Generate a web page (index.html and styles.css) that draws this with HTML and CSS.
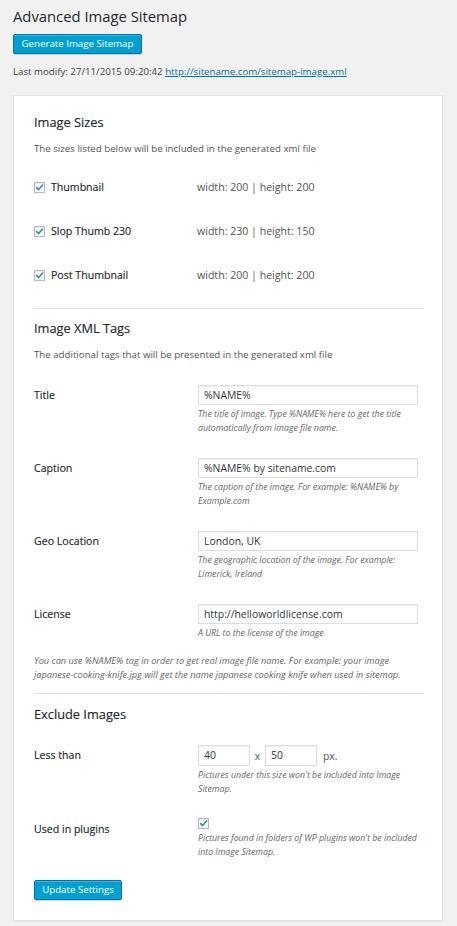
FILE: index.html
```html
<!DOCTYPE html>
<html lang="en">
<head>
<meta charset="utf-8">
<title>Advanced Image Sitemap</title>
<link rel="stylesheet" href="styles.css">
</head>
<body>
<div class="wrap">
  <h1 class="page-title">Advanced Image Sitemap</h1>
  <button class="btn btn-generate" type="button">Generate Image Sitemap</button>
  <p class="last-modify">Last modify: 27/11/2015 09:20:42 <a href="#">http://sitename.com/sitemap-image.xml</a></p>

  <div class="panel">
    <h3 class="section-title">Image Sizes</h3>
    <p class="section-desc">The sizes listed below will be included in the generated xml file</p>

    <div class="size-row">
      <label class="size-label"><span class="cb"><svg viewBox="0 0 11 11"><path d="M2.6 5.6 L4.6 7.6 L8.6 3" /></svg></span>Thumbnail</label>
      <span class="size-dims">width: 200 | height: 200</span>
    </div>
    <div class="size-row">
      <label class="size-label"><span class="cb"><svg viewBox="0 0 11 11"><path d="M2.6 5.6 L4.6 7.6 L8.6 3" /></svg></span>Slop Thumb 230</label>
      <span class="size-dims">width: 230 | height: 150</span>
    </div>
    <div class="size-row">
      <label class="size-label"><span class="cb"><svg viewBox="0 0 11 11"><path d="M2.6 5.6 L4.6 7.6 L8.6 3" /></svg></span>Post Thumbnail</label>
      <span class="size-dims">width: 200 | height: 200</span>
    </div>

    <hr class="sep">

    <h3 class="section-title">Image XML Tags</h3>
    <p class="section-desc">The additional tags that will be presented in the generated xml file</p>

    <div class="form-row first">
      <div class="form-label">Title</div>
      <div class="form-field">
        <div class="text-input">%NAME%</div>
        <p class="field-desc">The title of image. Type %NAME% here to get the title automatically from image file name.</p>
      </div>
    </div>
    <div class="form-row">
      <div class="form-label">Caption</div>
      <div class="form-field">
        <div class="text-input">%NAME% by sitename.com</div>
        <p class="field-desc">The caption of the image. For example: %NAME% by Example.com</p>
      </div>
    </div>
    <div class="form-row">
      <div class="form-label">Geo Location</div>
      <div class="form-field">
        <div class="text-input">London, UK</div>
        <p class="field-desc">The geographic location of the image. For example: Limerick, Ireland</p>
      </div>
    </div>
    <div class="form-row">
      <div class="form-label">License</div>
      <div class="form-field">
        <div class="text-input">http://helloworldlicense.com</div>
        <p class="field-desc">A URL to the license of the image</p>
      </div>
    </div>

    <p class="note">You can use %NAME% tag in order to get real image file name. For example: your image japanese-cooking-knife.jpg will get the name japanese cooking knife when used in sitemap.</p>

    <hr class="sep sep-2">

    <h3 class="section-title">Exclude Images</h3>

    <div class="form-row first-ex">
      <div class="form-label">Less than</div>
      <div class="form-field">
        <div class="size-inputs">
          <div class="text-input small">40</div>
          <span class="times">x</span>
          <div class="text-input small">50</div>
          <span class="px">px.</span>
        </div>
        <p class="field-desc">Pictures under this size won't be included into Image Sitemap.</p>
      </div>
    </div>
    <div class="form-row plugins-row">
      <div class="form-label plugins-label">Used in plugins</div>
      <div class="form-field">
        <span class="cb cb-field"><svg viewBox="0 0 11 11"><path d="M2.6 5.6 L4.6 7.6 L8.6 3" /></svg></span>
        <p class="field-desc tight wide">Pictures found in folders of WP plugins won't be included into Image Sitemap.</p>
      </div>
    </div>

    <button class="btn btn-update" type="button">Update Settings</button>
  </div>
</div>
</body>
</html>
```

FILE: styles.css
```css
* { box-sizing: border-box; }

html, body {
  margin: 0;
  padding: 0;
  background: #f1f1f1;
}

body {
  font-family: "Open Sans", "Noto Sans", "Liberation Sans", sans-serif;
  color: #444;
  font-size: 9.7px;
}

.wrap {
  padding: 6px 14px 6px 13px;
}

.page-title {
  margin: 0;
  font-size: 14.8px;
  line-height: 20px;
  font-weight: 400;
  color: #23282d;
}

.btn {
  display: inline-block;
  font-family: inherit;
  background: #00a0d2;
  border: 1px solid #0073aa;
  border-radius: 2px;
  color: #fff;
  font-size: 9.7px;
  line-height: 18px;
  height: 20px;
  padding: 0;
  box-shadow: inset 0 1px 0 rgba(120, 200, 230, 0.5), 0 1px 0 rgba(0, 0, 0, 0.15);
  cursor: pointer;
}

.btn-generate {
  margin-top: 8px;
  width: 129px;
}

.last-modify {
  margin: 12px 0 0;
  line-height: 12px;
  font-size: 9.7px;
  color: #444;
}

.last-modify a {
  color: #0073aa;
  text-decoration: underline;
}

.panel {
  margin-top: 17px;
  background: #fff;
  border: 1px solid #e5e5e5;
  box-shadow: 0 1px 1px rgba(0, 0, 0, 0.04);
  padding: 18px 18px 20px 20px;
}

.section-title {
  margin: 0;
  font-size: 12.8px;
  line-height: 16px;
  font-weight: 400;
  color: #23282d;
  -webkit-text-stroke: 0.15px #23282d;
}

.section-desc {
  margin: 13px 0 0;
  font-size: 9.7px;
  line-height: 12px;
  color: #555;
}

.size-row {
  display: flex;
  align-items: center;
  height: 44px;
}

.section-desc + .size-row {
  margin-top: 10px;
}

.size-label {
  display: flex;
  align-items: center;
  width: 163px;
  font-size: 10.6px;
  font-weight: 400;
  color: #23282d;
  line-height: 14px;
  -webkit-text-stroke: 0.15px #23282d;
}

.cb {
  display: inline-block;
  width: 11px;
  height: 11px;
  border: 1px solid #b4b9be;
  background: #fff;
  box-shadow: inset 0 1px 2px rgba(0, 0, 0, 0.1);
  margin-right: 6px;
  position: relative;
  flex: none;
}

.cb svg {
  position: absolute;
  left: -1px;
  top: -1px;
  width: 11px;
  height: 11px;
}

.cb svg path {
  fill: none;
  stroke: #1e8cbe;
  stroke-width: 1.5;
  stroke-linecap: round;
  stroke-linejoin: round;
}

.size-dims {
  font-size: 10.6px;
  color: #555;
  line-height: 14px;
}

.sep {
  border: 0;
  border-top: 1px solid #dedede;
  margin: 11px 0 11px;
  height: 0;
}

.form-row {
  display: flex;
  margin-top: 23px;
}

.form-row.first {
  margin-top: 24px;
}

.form-label {
  width: 164px;
  flex: none;
  font-size: 10.6px;
  font-weight: 400;
  color: #23282d;
  line-height: 20px;
  -webkit-text-stroke: 0.15px #23282d;
}

.form-field {
  flex: 1;
}

.text-input {
  width: 220px;
  height: 20px;
  border: 1px solid #ddd;
  box-shadow: inset 0 1px 2px rgba(0, 0, 0, 0.07);
  background: #fff;
  color: #32373c;
  font-size: 10.4px;
  line-height: 18px;
  padding: 0 5px;
  white-space: nowrap;
}

.field-desc {
  margin: 2px 0 0;
  font-size: 8.75px;
  line-height: 14px;
  font-style: italic;
  color: #666;
  max-width: 222px;
}

.field-desc.wide {
  max-width: 226px;
}

.note {
  margin: 14px 0 0;
  font-size: 9.2px;
  line-height: 14px;
  font-style: italic;
  color: #666;
}

.sep-2 {
  margin-top: 11px;
  margin-bottom: 12px;
}

.form-row.first-ex {
  margin-top: 23px;
}

.size-inputs {
  display: flex;
  align-items: center;
}

.text-input.small {
  width: 52px;
  height: 21px;
  line-height: 19px;
}

.times {
  width: 15px;
  text-align: center;
  font-size: 10.4px;
  color: #555;
}

.px {
  margin-left: 6px;
  font-size: 10.4px;
  color: #555;
}

.plugins-row {
  margin-top: 22px;
}

.plugins-label {
  padding-top: 1px;
}

.cb-field {
  display: block;
  margin: 0;
}

.field-desc.tight {
  margin-top: 2px;
}

.btn-update {
  margin-top: 21px;
  width: 88px;
}
```
